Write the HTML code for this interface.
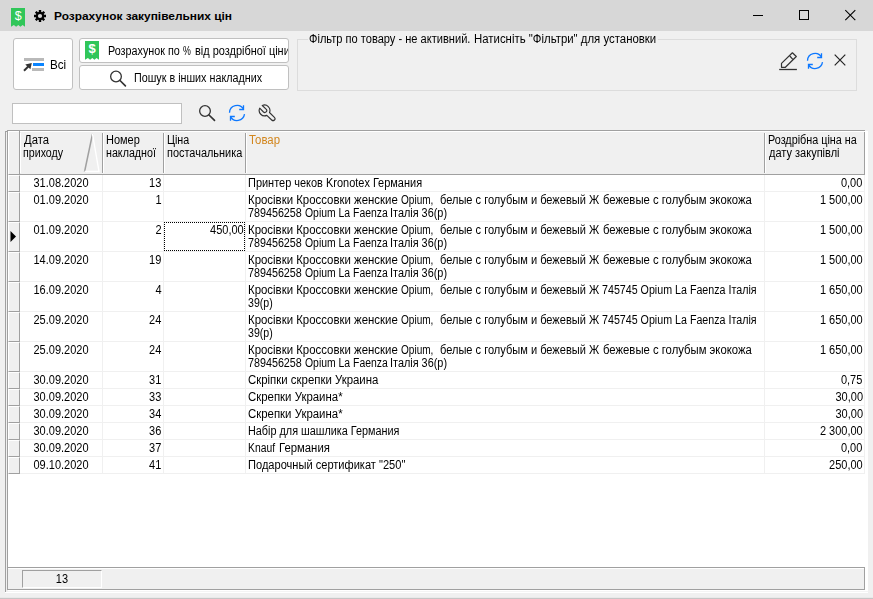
<!DOCTYPE html>
<html lang="uk"><head><meta charset="utf-8"><title>Розрахунок закупівельних цін</title>
<style>
html,body{margin:0;padding:0}
body{width:873px;height:599px;background:#f0f0f0;overflow:hidden;position:relative;font-family:"Liberation Sans",sans-serif;font-size:12px;line-height:13px;color:#000}
div,span,svg{position:absolute;box-sizing:border-box}
.t{white-space:pre;transform-origin:0 0}
.tb{left:0;top:0;width:873px;height:31px;background:#d7d7d7}
.title{left:54px;top:9px;font-size:12px;font-weight:bold;line-height:14px;white-space:nowrap;transform:scale(.992,.91);transform-origin:0 11px}
.btn{background:#fff;border:1px solid #c0c0c0;border-radius:3px;overflow:hidden}
.gb{left:297px;top:39px;width:560px;height:52px;border:1px solid #dcdcdc}
.legend{left:10px;top:-7px;width:350px;height:13px;background:#f0f0f0}
.inp{left:12px;top:103px;width:170px;height:21px;background:#fff;border:1px solid #c0c0c0}
/* grid: page coordinates */
.grid{left:0;top:0;width:873px;height:599px}
.gw{left:8px;top:131px;width:860px;height:462px;background:#fff}
.pl{left:5px;top:131px;width:1px;height:461px;background:#a0a0a0}
.pl:before{content:"";position:absolute;left:0;top:0;width:3px;height:1px;background:#a0a0a0}
.hil{left:19px;top:131px;width:1px;height:44px;background:#a0a0a0}
.gl{left:7px;top:130px;width:1px;height:460px;background:#a0a0a0}
.gt{left:7px;top:130px;width:858px;height:1px;background:#a0a0a0}
.pb{left:8px;top:591px;width:860px;height:1px;background:#f4f4f4}
.pb:after{content:"";position:absolute;left:-3px;top:1px;width:863px;height:1px;background:#fff}
.hband{left:8px;top:132px;width:857px;height:43px;background:#f0f0f0;border-bottom:1px solid #a0a0a0;border-right:1px solid #a0a0a0}
.hc{top:133px;height:40px;border-left:1px solid #fff;border-right:1px solid #a0a0a0;overflow:hidden}
.hi{left:8px;top:131px;width:12px;height:44px;background:#f0f0f0;border-left:1px solid #fff;border-top:1px solid #fff;border-right:1px solid #a0a0a0;border-bottom:1px solid #a0a0a0}

.hc.ttl{color:#d2861e}
.sort{left:62px;top:0}
.row{left:0;width:873px}
.row .ind{left:8px;top:0;width:12px;height:calc(100% + 1px);background:#f0f0f0;border-left:1px solid #fff;border-top:1px solid #fff;border-right:1px solid #a0a0a0;border-bottom:1px solid #a0a0a0}
.row .ind svg{left:1px;top:50%;margin-top:-6px}
.row .c{top:0;height:calc(100% + 1px);overflow:hidden;border-right:1px solid #f0f0f0;border-bottom:1px solid #f0f0f0}
.focus{top:0;border:1px dotted #000}
.foot{left:7px;top:567px;width:858px;height:23px;background:#f0f0f0;border:1px solid #a0a0a0}
.foot:before{content:"";position:absolute;left:0;top:0;width:100%;height:1px;background:#fff}
.fcell{left:22px;top:570px;width:80px;height:18px;border-left:1px solid #a0a0a0;border-top:1px solid #a0a0a0;border-right:1px solid #fff;border-bottom:1px solid #fff}
.botline{left:0;top:597px;width:873px;height:2px;background:#c6c6c6;border-top:1px solid #e9e9e9}
.tl{left:0;top:0;width:100%;height:100%;will-change:opacity}
</style></head>
<body>
<div class="tb">
<svg style="left:11px;top:8px" width="15" height="19" viewBox="0 0 15 19"><path d="M0 0H14V18.7L11.6 17L9.4 18.7L7.3 17L5.1 18.7L2.9 17L0 18.7Z" fill="#30c659"/><text x="7.2" y="12.4" font-family="Liberation Sans, sans-serif" font-size="12.5" fill="#fff" text-anchor="middle">$</text></svg>
<svg style="left:34px;top:10px" width="12" height="12" viewBox="0 0 12 12"><g fill="none" stroke="#000"><circle cx="6" cy="6" r="3.2" stroke-width="2.2"/><g stroke-width="2.4"><path d="M6 0V2.2M6 9.8V12M0 6H2.2M9.8 6H12M1.76 1.76L3.3 3.3M8.7 8.7L10.24 10.24M1.76 10.24L3.3 8.7M8.7 3.3L10.24 1.76"/></g></g></svg>
<span class="title">Розрахунок закупівельних цін</span>
<svg style="left:745px;top:0" width="128" height="31" viewBox="0 0 128 31"><g fill="none" stroke="#000" stroke-width="1"><path d="M8 15.5H18"/><rect x="54.5" y="10.5" width="9" height="9"/><path d="M100.3 10.2L110.3 20.2M110.3 10.2L100.3 20.2" stroke-width="1.1"/></g></svg>
</div>
<div class="btn" style="left:13px;top:38px;width:60px;height:52px">
<svg style="left:9px;top:19px" width="23" height="15" viewBox="0 0 23 15"><rect x="1" y="0" width="20" height="3" fill="#b9b9b9"/><rect x="10" y="5" width="11" height="3" fill="#0a84ff"/><rect x="9" y="10" width="12" height="3" fill="#b9b9b9"/><path d="M1 12.8L6 7.8" stroke="#333" stroke-width="2" fill="none"/><path d="M2.3 6.4L8.8 5L7.4 11.2Z" fill="#333"/></svg>
<div class="tl"><span class="t" style="left:36.20px;top:20.0px;transform:scaleX(0.9685)">Всі</span></div>
</div>
<div class="btn" style="left:79px;top:38px;width:210px;height:25px">
<svg style="left:5px;top:2.3px" width="15" height="19" viewBox="0 0 15 19"><path d="M0 0H14V18.7L11.6 17L9.4 18.7L7.3 17L5.1 18.7L2.9 17L0 18.7Z" fill="#30c659"/><text x="7.1" y="12.4" font-family="Liberation Sans, sans-serif" font-size="13" font-weight="bold" fill="#fff" text-anchor="middle">$</text></svg>
<div class="tl"><span class="t" style="left:28.20px;top:6.0px;transform:scaleX(0.8985)">Розрахунок по</span> <span class="t" style="left:103.20px;top:6.0px;transform:scaleX(0.7364)">%</span> <span class="t" style="left:115.20px;top:6.0px;transform:scaleX(0.9120)">від роздрібної ціни</span></div>
</div>
<div class="btn" style="left:79px;top:65px;width:210px;height:25px">
<svg style="left:28px;top:2px" width="20" height="20" viewBox="0 0 20 20"><g fill="none" stroke="#333" stroke-width="1.3"><circle cx="8" cy="8.5" r="5.35"/><path d="M12 12.5L17.4 17.8" stroke-width="1.7" stroke-linecap="round"/></g></svg>
<div class="tl"><span class="t" style="left:54.20px;top:6.0px;transform:scaleX(0.8966)">Пошук в інших накладних</span></div>
</div>
<div class="gb"><div class="legend"><div class="tl"><span class="t" style="left:1.20px;top:0.0px;transform:scaleX(0.9228)">Фільтр по товару - не активний.</span> <span class="t" style="left:166.20px;top:0.0px;transform:scaleX(0.9495)">Натисніть "Фільтри" для установки</span></div></div>
<svg style="left:481px;top:11px" width="20" height="20" viewBox="0 0 20 20"><g fill="none" stroke="#333" stroke-width="1.2" stroke-linejoin="round"><path d="M0.2 18.5H17.9" stroke-width="1.3"/><path d="M2.5 16.3V12.4L13.4 1.8L17.3 5.5L6.4 16.3Z"/><path d="M10.8 5L13.8 8.3"/></g></svg>
<svg style="left:508px;top:12px" width="18" height="18" viewBox="0 0 18 18"><g fill="none" stroke="#0d78ff" stroke-width="1.3"><path d="M1.5 8.7A7.5 7.5 0 0 1 15.5 5.3"/><path d="M15.5 1.2V5.5H11.2"/><path d="M16.5 10.2A7.5 7.5 0 0 1 2.5 12.6"/><path d="M2.5 16.7V12.5H6.8"/></g></svg>
<svg style="left:535.4px;top:13.4px" width="14" height="14" viewBox="0 0 14 14"><path d="M1.7 1.7L12.3 12.3M12.3 1.7L1.7 12.3" stroke="#222" stroke-width="1.2" fill="none"/></svg>
</div>
<div class="inp"></div>
<svg style="left:197px;top:103px" width="20" height="20" viewBox="0 0 20 20"><g fill="none" stroke="#333" stroke-width="1.3"><circle cx="8" cy="8" r="5.35"/><path d="M12 12L17.5 17.3" stroke-width="1.7" stroke-linecap="round"/></g></svg>
<svg style="left:228px;top:104px" width="18" height="18" viewBox="0 0 18 18"><g fill="none" stroke="#0d78ff" stroke-width="1.3"><path d="M1.5 8.7A7.5 7.5 0 0 1 15.5 5.3"/><path d="M15.5 1.2V5.5H11.2"/><path d="M16.5 10.2A7.5 7.5 0 0 1 2.5 12.6"/><path d="M2.5 16.7V12.5H6.8"/></g></svg>
<svg style="left:258px;top:104px" width="18" height="18" viewBox="0 0 18 18"><path d="M1.7 4.2L5.5 8A1.95 1.95 0 0 0 8.3 5.3L4.3 1.5A5.4 5.4 0 0 1 11.5 8.5L16.4 13.3A1.9 1.9 0 0 1 13.7 16L8.8 11.4A5.4 5.4 0 0 1 1.7 4.2Z" fill="none" stroke="#333" stroke-width="1.15" stroke-linejoin="round"/></svg>
<div class="grid">
<div class="gw"></div><div class="pl"></div><div class="pb"></div><div class="gt"></div><div class="gl"></div><div class="hband"></div>
<div class="hi"></div><div class="hil"></div><div class="foot"></div>
<div class="tl">
<div class="hc " style="left:20px;width:83px"><span class="t" style="left:3.00px;top:1px;transform:scaleX(0.9406)">Дата</span> <span class="t" style="left:2.20px;top:14px;transform:scaleX(0.8881)">приходу</span><svg class="sort" width="17" height="40" viewBox="0 0 17 40"><path d="M1.5 39 L9.5 1" stroke="#a0a0a0" stroke-width="1.5" fill="none"/><path d="M9.5 1 L16 38.5 L1.5 38.5" stroke="#ffffff" stroke-width="1.4" fill="none"/></svg></div>
<div class="hc " style="left:103px;width:61px"><span class="t" style="left:2.20px;top:1px;transform:scaleX(0.9151)">Номер</span> <span class="t" style="left:2.20px;top:14px;transform:scaleX(0.8912)">накладної</span></div>
<div class="hc " style="left:164px;width:82px"><span class="t" style="left:2.20px;top:1px;transform:scaleX(0.8939)">Ціна</span> <span class="t" style="left:2.20px;top:14px;transform:scaleX(0.9112)">постачальника</span></div>
<div class="hc ttl" style="left:246px;width:519px"><span class="t" style="left:2.20px;top:1px;transform:scaleX(0.9490)">Товар</span></div>
<div class="hc " style="left:765px;width:100px"><span class="t" style="left:2.20px;top:1px;transform:scaleX(0.9009)">Роздрібна ціна на</span> <span class="t" style="left:2.80px;top:14px;transform:scaleX(0.9173)">дату закупівлі</span></div>
<div class="row" style="top:175px;height:16px"><div class="ind"></div><div class="c c" style="left:20px;width:83px"><span class="t " style="left:0;width:100%;text-align:center;top:2px;transform-origin:50% 0;transform:scaleX(0.9167)">31.08.2020</span></div>
<div class="c r" style="left:103px;width:61px"><span class="t " style="right:1.4px;top:2px;transform-origin:100% 0;transform:scaleX(0.9167)">13</span></div>
<div class="c r" style="left:164px;width:82px"></div>
<div class="c l" style="left:246px;width:519px"><span class="t" style="left:2.20px;top:2px;transform:scaleX(0.9136)">Принтер чеков Kronotex Германия</span></div>
<div class="c r" style="left:765px;width:100px"><span class="t " style="right:1.4px;top:2px;transform-origin:100% 0;transform:scaleX(0.9167)">0,00</span></div>
</div>
<div class="row" style="top:192px;height:29px"><div class="ind"></div><div class="c c" style="left:20px;width:83px"><span class="t " style="left:0;width:100%;text-align:center;top:2px;transform-origin:50% 0;transform:scaleX(0.9167)">01.09.2020</span></div>
<div class="c r" style="left:103px;width:61px"><span class="t " style="right:1.4px;top:2px;transform-origin:100% 0;transform:scaleX(0.9167)">1</span></div>
<div class="c r" style="left:164px;width:82px"></div>
<div class="c l" style="left:246px;width:519px"><span class="t" style="left:2.20px;top:2px;transform:scaleX(0.9515)">Кросівки Кроссовки женские</span> <span class="t" style="left:155.20px;top:2px;transform:scaleX(0.8372)">Opium,</span> <span class="t" style="left:194.20px;top:2px;transform:scaleX(0.9208)">белые с голубым и бежевый Ж</span> <span class="t" style="left:357.20px;top:2px;transform:scaleX(0.9425)">бежевые с голубым экокожа</span> <span class="t" style="left:2.20px;top:15px;transform:scaleX(0.8958)">789456258</span> <span class="t" style="left:59.20px;top:15px;transform:scaleX(0.8682)">Opium La Faenza</span> <span class="t" style="left:144.29px;top:15px;transform:scaleX(0.9065)">Італія 36(р)</span></div>
<div class="c r" style="left:765px;width:100px"><span class="t " style="right:1.4px;top:2px;transform-origin:100% 0;transform:scaleX(0.9167)">1 500,00</span></div>
</div>
<div class="row" style="top:222px;height:29px"><div class="ind"><svg width="7" height="11" viewBox="0 0 7 11"><path d="M0.5 0 L6 5.5 L0.5 11 Z" fill="#000"/></svg></div><div class="c c" style="left:20px;width:83px"><span class="t " style="left:0;width:100%;text-align:center;top:2px;transform-origin:50% 0;transform:scaleX(0.9167)">01.09.2020</span></div>
<div class="c r" style="left:103px;width:61px"><span class="t " style="right:1.4px;top:2px;transform-origin:100% 0;transform:scaleX(0.9167)">2</span></div>
<div class="c r" style="left:164px;width:82px"><span class="t " style="right:1.4px;top:2px;transform-origin:100% 0;transform:scaleX(0.9167)">450,00</span></div>
<div class="c l" style="left:246px;width:519px"><span class="t" style="left:2.20px;top:2px;transform:scaleX(0.9515)">Кросівки Кроссовки женские</span> <span class="t" style="left:155.20px;top:2px;transform:scaleX(0.8372)">Opium,</span> <span class="t" style="left:194.20px;top:2px;transform:scaleX(0.9208)">белые с голубым и бежевый Ж</span> <span class="t" style="left:357.20px;top:2px;transform:scaleX(0.9425)">бежевые с голубым экокожа</span> <span class="t" style="left:2.20px;top:15px;transform:scaleX(0.8958)">789456258</span> <span class="t" style="left:59.20px;top:15px;transform:scaleX(0.8682)">Opium La Faenza</span> <span class="t" style="left:144.29px;top:15px;transform:scaleX(0.9065)">Італія 36(р)</span></div>
<div class="c r" style="left:765px;width:100px"><span class="t " style="right:1.4px;top:2px;transform-origin:100% 0;transform:scaleX(0.9167)">1 500,00</span></div>
<div class="focus" style="left:164px;width:81px;height:29px"></div></div>
<div class="row" style="top:252px;height:29px"><div class="ind"></div><div class="c c" style="left:20px;width:83px"><span class="t " style="left:0;width:100%;text-align:center;top:2px;transform-origin:50% 0;transform:scaleX(0.9167)">14.09.2020</span></div>
<div class="c r" style="left:103px;width:61px"><span class="t " style="right:1.4px;top:2px;transform-origin:100% 0;transform:scaleX(0.9167)">19</span></div>
<div class="c r" style="left:164px;width:82px"></div>
<div class="c l" style="left:246px;width:519px"><span class="t" style="left:2.20px;top:2px;transform:scaleX(0.9515)">Кросівки Кроссовки женские</span> <span class="t" style="left:155.20px;top:2px;transform:scaleX(0.8372)">Opium,</span> <span class="t" style="left:194.20px;top:2px;transform:scaleX(0.9208)">белые с голубым и бежевый Ж</span> <span class="t" style="left:357.20px;top:2px;transform:scaleX(0.9425)">бежевые с голубым экокожа</span> <span class="t" style="left:2.20px;top:15px;transform:scaleX(0.8958)">789456258</span> <span class="t" style="left:59.20px;top:15px;transform:scaleX(0.8682)">Opium La Faenza</span> <span class="t" style="left:144.29px;top:15px;transform:scaleX(0.9065)">Італія 36(р)</span></div>
<div class="c r" style="left:765px;width:100px"><span class="t " style="right:1.4px;top:2px;transform-origin:100% 0;transform:scaleX(0.9167)">1 500,00</span></div>
</div>
<div class="row" style="top:282px;height:29px"><div class="ind"></div><div class="c c" style="left:20px;width:83px"><span class="t " style="left:0;width:100%;text-align:center;top:2px;transform-origin:50% 0;transform:scaleX(0.9167)">16.09.2020</span></div>
<div class="c r" style="left:103px;width:61px"><span class="t " style="right:1.4px;top:2px;transform-origin:100% 0;transform:scaleX(0.9167)">4</span></div>
<div class="c r" style="left:164px;width:82px"></div>
<div class="c l" style="left:246px;width:519px"><span class="t" style="left:2.20px;top:2px;transform:scaleX(0.9515)">Кросівки Кроссовки женские</span> <span class="t" style="left:155.20px;top:2px;transform:scaleX(0.8372)">Opium,</span> <span class="t" style="left:194.20px;top:2px;transform:scaleX(0.9208)">белые с голубым и бежевый Ж</span> <span class="t" style="left:356.20px;top:2px;transform:scaleX(0.8901)">745745 Opium La Faenza Італія</span> <span class="t" style="left:2.20px;top:15px;transform:scaleX(0.8816)">39(р)</span></div>
<div class="c r" style="left:765px;width:100px"><span class="t " style="right:1.4px;top:2px;transform-origin:100% 0;transform:scaleX(0.9167)">1 650,00</span></div>
</div>
<div class="row" style="top:312px;height:29px"><div class="ind"></div><div class="c c" style="left:20px;width:83px"><span class="t " style="left:0;width:100%;text-align:center;top:2px;transform-origin:50% 0;transform:scaleX(0.9167)">25.09.2020</span></div>
<div class="c r" style="left:103px;width:61px"><span class="t " style="right:1.4px;top:2px;transform-origin:100% 0;transform:scaleX(0.9167)">24</span></div>
<div class="c r" style="left:164px;width:82px"></div>
<div class="c l" style="left:246px;width:519px"><span class="t" style="left:2.20px;top:2px;transform:scaleX(0.9515)">Кросівки Кроссовки женские</span> <span class="t" style="left:155.20px;top:2px;transform:scaleX(0.8372)">Opium,</span> <span class="t" style="left:194.20px;top:2px;transform:scaleX(0.9208)">белые с голубым и бежевый Ж</span> <span class="t" style="left:356.20px;top:2px;transform:scaleX(0.8901)">745745 Opium La Faenza Італія</span> <span class="t" style="left:2.20px;top:15px;transform:scaleX(0.8816)">39(р)</span></div>
<div class="c r" style="left:765px;width:100px"><span class="t " style="right:1.4px;top:2px;transform-origin:100% 0;transform:scaleX(0.9167)">1 650,00</span></div>
</div>
<div class="row" style="top:342px;height:29px"><div class="ind"></div><div class="c c" style="left:20px;width:83px"><span class="t " style="left:0;width:100%;text-align:center;top:2px;transform-origin:50% 0;transform:scaleX(0.9167)">25.09.2020</span></div>
<div class="c r" style="left:103px;width:61px"><span class="t " style="right:1.4px;top:2px;transform-origin:100% 0;transform:scaleX(0.9167)">24</span></div>
<div class="c r" style="left:164px;width:82px"></div>
<div class="c l" style="left:246px;width:519px"><span class="t" style="left:2.20px;top:2px;transform:scaleX(0.9515)">Кросівки Кроссовки женские</span> <span class="t" style="left:155.20px;top:2px;transform:scaleX(0.8372)">Opium,</span> <span class="t" style="left:194.20px;top:2px;transform:scaleX(0.9208)">белые с голубым и бежевый Ж</span> <span class="t" style="left:357.20px;top:2px;transform:scaleX(0.9425)">бежевые с голубым экокожа</span> <span class="t" style="left:2.20px;top:15px;transform:scaleX(0.8958)">789456258</span> <span class="t" style="left:59.20px;top:15px;transform:scaleX(0.8682)">Opium La Faenza</span> <span class="t" style="left:144.29px;top:15px;transform:scaleX(0.9065)">Італія 36(р)</span></div>
<div class="c r" style="left:765px;width:100px"><span class="t " style="right:1.4px;top:2px;transform-origin:100% 0;transform:scaleX(0.9167)">1 650,00</span></div>
</div>
<div class="row" style="top:372px;height:16px"><div class="ind"></div><div class="c c" style="left:20px;width:83px"><span class="t " style="left:0;width:100%;text-align:center;top:2px;transform-origin:50% 0;transform:scaleX(0.9167)">30.09.2020</span></div>
<div class="c r" style="left:103px;width:61px"><span class="t " style="right:1.4px;top:2px;transform-origin:100% 0;transform:scaleX(0.9167)">31</span></div>
<div class="c r" style="left:164px;width:82px"></div>
<div class="c l" style="left:246px;width:519px"><span class="t" style="left:2.20px;top:2px;transform:scaleX(0.9510)">Скріпки скрепки Украина</span></div>
<div class="c r" style="left:765px;width:100px"><span class="t " style="right:1.4px;top:2px;transform-origin:100% 0;transform:scaleX(0.9167)">0,75</span></div>
</div>
<div class="row" style="top:389px;height:16px"><div class="ind"></div><div class="c c" style="left:20px;width:83px"><span class="t " style="left:0;width:100%;text-align:center;top:2px;transform-origin:50% 0;transform:scaleX(0.9167)">30.09.2020</span></div>
<div class="c r" style="left:103px;width:61px"><span class="t " style="right:1.4px;top:2px;transform-origin:100% 0;transform:scaleX(0.9167)">33</span></div>
<div class="c r" style="left:164px;width:82px"></div>
<div class="c l" style="left:246px;width:519px"><span class="t" style="left:2.20px;top:2px;transform:scaleX(0.9515)">Скрепки Украина*</span></div>
<div class="c r" style="left:765px;width:100px"><span class="t " style="right:1.4px;top:2px;transform-origin:100% 0;transform:scaleX(0.9167)">30,00</span></div>
</div>
<div class="row" style="top:406px;height:16px"><div class="ind"></div><div class="c c" style="left:20px;width:83px"><span class="t " style="left:0;width:100%;text-align:center;top:2px;transform-origin:50% 0;transform:scaleX(0.9167)">30.09.2020</span></div>
<div class="c r" style="left:103px;width:61px"><span class="t " style="right:1.4px;top:2px;transform-origin:100% 0;transform:scaleX(0.9167)">34</span></div>
<div class="c r" style="left:164px;width:82px"></div>
<div class="c l" style="left:246px;width:519px"><span class="t" style="left:2.20px;top:2px;transform:scaleX(0.9515)">Скрепки Украина*</span></div>
<div class="c r" style="left:765px;width:100px"><span class="t " style="right:1.4px;top:2px;transform-origin:100% 0;transform:scaleX(0.9167)">30,00</span></div>
</div>
<div class="row" style="top:423px;height:16px"><div class="ind"></div><div class="c c" style="left:20px;width:83px"><span class="t " style="left:0;width:100%;text-align:center;top:2px;transform-origin:50% 0;transform:scaleX(0.9167)">30.09.2020</span></div>
<div class="c r" style="left:103px;width:61px"><span class="t " style="right:1.4px;top:2px;transform-origin:100% 0;transform:scaleX(0.9167)">36</span></div>
<div class="c r" style="left:164px;width:82px"></div>
<div class="c l" style="left:246px;width:519px"><span class="t" style="left:2.20px;top:2px;transform:scaleX(0.9027)">Набір для шашлика Германия</span></div>
<div class="c r" style="left:765px;width:100px"><span class="t " style="right:1.4px;top:2px;transform-origin:100% 0;transform:scaleX(0.9167)">2 300,00</span></div>
</div>
<div class="row" style="top:440px;height:16px"><div class="ind"></div><div class="c c" style="left:20px;width:83px"><span class="t " style="left:0;width:100%;text-align:center;top:2px;transform-origin:50% 0;transform:scaleX(0.9167)">30.09.2020</span></div>
<div class="c r" style="left:103px;width:61px"><span class="t " style="right:1.4px;top:2px;transform-origin:100% 0;transform:scaleX(0.9167)">37</span></div>
<div class="c r" style="left:164px;width:82px"></div>
<div class="c l" style="left:246px;width:519px"><span class="t" style="left:2.20px;top:2px;transform:scaleX(0.8618)">Knauf</span> <span class="t" style="left:33.20px;top:2px;transform:scaleX(0.9456)">Германия</span></div>
<div class="c r" style="left:765px;width:100px"><span class="t " style="right:1.4px;top:2px;transform-origin:100% 0;transform:scaleX(0.9167)">0,00</span></div>
</div>
<div class="row" style="top:457px;height:16px"><div class="ind"></div><div class="c c" style="left:20px;width:83px"><span class="t " style="left:0;width:100%;text-align:center;top:2px;transform-origin:50% 0;transform:scaleX(0.9167)">09.10.2020</span></div>
<div class="c r" style="left:103px;width:61px"><span class="t " style="right:1.4px;top:2px;transform-origin:100% 0;transform:scaleX(0.9167)">41</span></div>
<div class="c r" style="left:164px;width:82px"></div>
<div class="c l" style="left:246px;width:519px"><span class="t" style="left:2.20px;top:2px;transform:scaleX(0.9229)">Подарочный сертификат "250"</span></div>
<div class="c r" style="left:765px;width:100px"><span class="t " style="right:1.4px;top:2px;transform-origin:100% 0;transform:scaleX(0.9167)">250,00</span></div>
</div>
<div class="fcell"><span class="t " style="left:0;width:100%;text-align:center;top:2px;transform-origin:50% 0;transform:scaleX(0.9167)">13</span></div>
</div>
</div>
<div class="botline"></div>
</body></html>
